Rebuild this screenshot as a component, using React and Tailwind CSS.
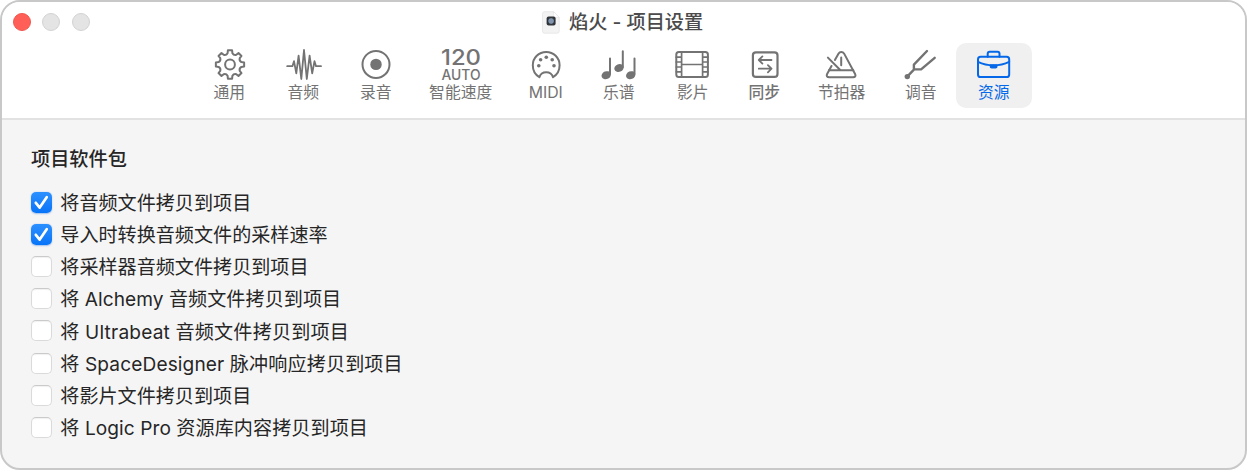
import clsx from 'clsx';

const gearPath =
  Array.from({ length: 8 }, (_, i) => {
    const at = (r, offset) => {
      const a = ((i * 45 + offset) * Math.PI) / 180;
      return `${(17 + r * Math.cos(a)).toFixed(2)} ${(16.5 + r * Math.sin(a)).toFixed(2)}`;
    };
    return `${i === 0 ? 'M' : 'L'}${at(11.6, -12)} L${at(14.3, -8.5)} L${at(14.3, 8.5)} L${at(11.6, 12)} Q${at(9.8, 22.5)} ${at(11.6, 33)}`;
  }).join(' ') + 'Z';

function GearIcon() {
  return (
    <>
      <path d={gearPath} />
      <circle cx="17" cy="16.5" r="4.9" />
    </>
  );
}

function WaveIcon() {
  return (
    <path
      strokeWidth="1.8"
      d="M.2 18.2H5.4L7 13.2 9.3 25.3 11.6 7.6 14.3 31 17 2 19.8 31 22.6 7.6 25.2 25.3 27.5 13.2 29 18.2H34"
    />
  );
}

function RecordIcon() {
  return (
    <>
      <circle cx="17" cy="16.4" r="13.5" />
      <circle cx="17" cy="16.4" r="5.7" fill="currentColor" stroke="none" />
    </>
  );
}

function MidiIcon() {
  return (
    <>
      <path d="M10.4 29.2C6.3 26.8 3.8 22.4 3.8 17.3a13.4 13.4 0 0 1 26.8 0c0 5.1-2.5 9.5-6.6 11.9-.9-3-3.3-4.9-6.8-4.9s-5.9 1.9-6.8 4.9Z" />
      <g fill="currentColor" stroke="none">
        <circle cx="9.8" cy="17.7" r="1.8" />
        <circle cx="11.6" cy="11.8" r="1.8" />
        <circle cx="17.3" cy="9.3" r="1.8" />
        <circle cx="23.2" cy="11.8" r="1.8" />
        <circle cx="25" cy="17.7" r="1.8" />
      </g>
    </>
  );
}

function TempoIcon() {
  return (
    <g fill="currentColor" stroke="none" textAnchor="middle" fontFamily="Inter, sans-serif">
      <text x="17" y="17.4" fontSize="21.5" fontWeight="500" textLength="40" lengthAdjust="spacingAndGlyphs">120</text>
      <text x="17" y="32" fontSize="13.8" fontWeight="500" textLength="39" lengthAdjust="spacingAndGlyphs">AUTO</text>
    </g>
  );
}

function NotesIcon() {
  return (
    <>
      <path d="M8 10.4V26M20.8 3.2V19M32.5 10.4V26" />
      <g fill="currentColor" stroke="none">
        <ellipse cx="4.2" cy="27.2" rx="4.8" ry="3.9" transform="rotate(-22 4.2 27.2)" />
        <ellipse cx="17" cy="20" rx="4.8" ry="3.9" transform="rotate(-22 17 20)" />
        <ellipse cx="28.7" cy="27.2" rx="4.8" ry="3.9" transform="rotate(-22 28.7 27.2)" />
      </g>
    </>
  );
}

function FilmIcon() {
  return (
    <>
      <rect x=".3" y="4.1" width="31.6" height="24.8" rx="2.5" />
      <path d="M5.6 4.1V28.9M26.6 4.1V28.9M5.6 16.5H26.6M.3 9.2H5.6M.3 14H5.6M.3 19H5.6M.3 23.8H5.6M26.6 9.2H31.9M26.6 14H31.9M26.6 19H31.9M26.6 23.8H31.9" strokeWidth="1.7" />
    </>
  );
}

function SyncIcon() {
  return (
    <>
      <rect x="4.9" y="4.3" width="24.6" height="24.6" rx="3" strokeWidth="2.2" />
      <path d="M23.5 12H11M14.4 8.4 10.8 12 14.4 15.6M10.8 20.7H23.3M19.9 17.1 23.5 20.7 19.9 24.3" strokeWidth="1.8" />
    </>
  );
}

function MetronomeIcon() {
  return (
    <>
      <path d="M6.5 18 2.1 26c-1 2 .1 3.3 2 3.3H28.1c2 0 3-1.4 2-3.3L19 5.4c-1.2-2-4.2-2-5.4 0L9.9 12" />
      <path d="M3.9 22.2H28.3M2.9 9.6 15.5 22.2M16.2 9.6V17.2" />
    </>
  );
}

function TuningForkIcon() {
  return (
    <>
      <path d="M23 3 9.9 16.6V21.4H17.1L30.7 9.8M9.9 21.6 3.2 28.6" strokeWidth="2.4" />
      <circle cx="3.3" cy="28.6" r="2.7" fill="currentColor" stroke="none" />
    </>
  );
}

function BriefcaseIcon() {
  return (
    <>
      <rect x="1" y="8.8" width="31.2" height="20.2" rx="2.6" />
      <path d="M10.7 8.8V5.8c0-1.3.7-2 2-2h7.8c1.3 0 2 .7 2 2V8.8" />
      <path d="M1 13.8C10.5 18.4 22.7 18.4 32.2 13.8" />
      <path d="M12.7 16.6h7.8v2c0 1.3-.8 2-2 2h-3.8c-1.2 0-2-.7-2-2Z" fill="currentColor" stroke="none" />
    </>
  );
}

const tabs = [
  { label: '通用', icon: GearIcon, width: 'w-[77px]' },
  { label: '音频', icon: WaveIcon, width: 'w-[71px]' },
  { label: '录音', icon: RecordIcon, width: 'w-[74px]' },
  { label: '智能速度', icon: TempoIcon, width: 'w-24' },
  { label: 'MIDI', icon: MidiIcon, width: 'w-[74px]' },
  { label: '乐谱', icon: NotesIcon, width: 'w-[72px]' },
  { label: '影片', icon: FilmIcon, width: 'w-[76px]' },
  { label: '同步', icon: SyncIcon, width: 'w-[67px]', bold: true },
  { label: '节拍器', icon: MetronomeIcon, width: 'w-[88px]' },
  { label: '调音', icon: TuningForkIcon, width: 'w-[70px]' },
  { label: '资源', icon: BriefcaseIcon, width: 'w-[76px]', active: true },
];

const options = [
  { label: '将音频文件拷贝到项目', checked: true },
  { label: '导入时转换音频文件的采样速率', checked: true },
  { label: '将采样器音频文件拷贝到项目' },
  { label: '将 Alchemy 音频文件拷贝到项目', tracking: 'tracking-[0.05px]' },
  { label: '将 Ultrabeat 音频文件拷贝到项目', tracking: 'tracking-[0.18px]' },
  { label: '将 SpaceDesigner 脉冲响应拷贝到项目', tracking: 'tracking-[0.12px]' },
  { label: '将影片文件拷贝到项目' },
  { label: '将 Logic Pro 资源库内容拷贝到项目', tracking: 'tracking-[0.07px]' },
];

function Tab({ label, icon: Icon, width, bold, active }) {
  return (
    <button
      className={clsx(
        'flex h-[65px] flex-col items-center rounded-[10px] pt-[5px]',
        width,
        active ? 'bg-[#f0f0f0] text-[#0568e8]' : 'text-[#737373]'
      )}
    >
      <svg
        className="h-8 w-[34px] shrink-0 overflow-visible"
        viewBox="0 0 34 32"
        fill="none"
        stroke="currentColor"
        strokeWidth="2"
        strokeLinecap="round"
        strokeLinejoin="round"
      >
        <Icon />
      </svg>
      <span className={clsx('pt-px pr-[0.6px] text-[15.8px] leading-6 whitespace-nowrap', bold && 'font-medium')}>{label}</span>
    </button>
  );
}

function Checkbox({ checked }) {
  return (
    <span
      className={clsx(
        'flex size-[21px] shrink-0 items-center justify-center rounded-[5px]',
        checked
          ? 'bg-linear-to-b from-[#2b90ff] to-[#0674f8] shadow-[0_0.5px_1.5px_rgba(0,90,220,0.35)]'
          : 'border border-[#dadada] border-t-[#cacaca] bg-white shadow-[inset_0_1px_1px_rgba(0,0,0,0.06)]'
      )}
    >
      {checked && (
        <svg className="size-[21px]" viewBox="0 0 21 21" fill="none" stroke="white" strokeWidth="2.7" strokeLinecap="round" strokeLinejoin="round">
          <path d="M4.8 10.8 8.7 15.6 15.7 5.2" />
        </svg>
      )}
    </span>
  );
}

function DocumentIcon() {
  return (
    <svg className="h-[23px] w-[18px]" viewBox="0 0 18 23">
      <path d="M2.5.7H11.5L17.2 6.4V20.2a2 2 0 0 1-2 2H2.5a2 2 0 0 1-2-2V2.7a2 2 0 0 1 2-2Z" fill="#f3f3f3" stroke="#e4e4e4" strokeWidth=".8" />
      <path d="M11.5.7V4.9a1.5 1.5 0 0 0 1.5 1.5h4.2Z" fill="#fff" stroke="#e2e2e2" strokeWidth=".6" />
      <rect x="4.6" y="5.4" width="9" height="9.2" rx="2" fill="#333438" />
      <circle cx="9.1" cy="10" r="3.4" fill="#8095ad" stroke="#16181c" strokeWidth=".8" />
    </svg>
  );
}

export default function App() {
  return (
    <div className="h-[471px] w-[1248px] bg-white font-['Inter','Noto_Sans_CJK_SC',sans-serif]">
      <div className="flex h-[470px] w-[1247px] flex-col overflow-hidden rounded-[20px] border-2 border-[#c8c8c8] bg-[#f5f5f5]">
        {/* Title bar */}
        <header className="h-[118px] shrink-0 border-b-2 border-[#e2e2e2] bg-white">
          <div className="flex h-[41px] items-center pb-px pl-[11px]">
            <div className="flex w-[529px] gap-[11.3px]">
              <span className="size-[18px] rounded-full border border-[#f0564d] bg-[#ff5f57]" />
              <span className="size-[18px] rounded-full border border-[#d2d2d2] bg-[#e4e4e4]" />
              <span className="size-[18px] rounded-full border border-[#d2d2d2] bg-[#e4e4e4]" />
            </div>
            <DocumentIcon />
            <h1 className="-mt-px ml-[9px] text-[19.2px] leading-6 font-medium whitespace-nowrap text-[#4b4b4b]">焰火 - 项目设置</h1>
          </div>
          <nav className="flex pl-[189px]">
            {tabs.map((tab) => (
              <Tab key={tab.label} {...tab} />
            ))}
          </nav>
        </header>

        {/* Assets pane */}
        <main className="pt-[25px] pl-[29px] text-[#262626]">
          <h2 className="text-[19.2px] leading-7 font-medium">项目软件包</h2>
          <div className="mt-[13px] flex flex-col">
            {options.map((option) => (
              <label
                key={option.label}
                className={clsx('flex h-[32.2px] items-center gap-[8.3px] text-[19.1px] leading-7 whitespace-nowrap', option.tracking)}
              >
                <Checkbox checked={option.checked} />
                <span className="pt-[1.6px]">{option.label}</span>
              </label>
            ))}
          </div>
        </main>
      </div>
    </div>
  );
}
